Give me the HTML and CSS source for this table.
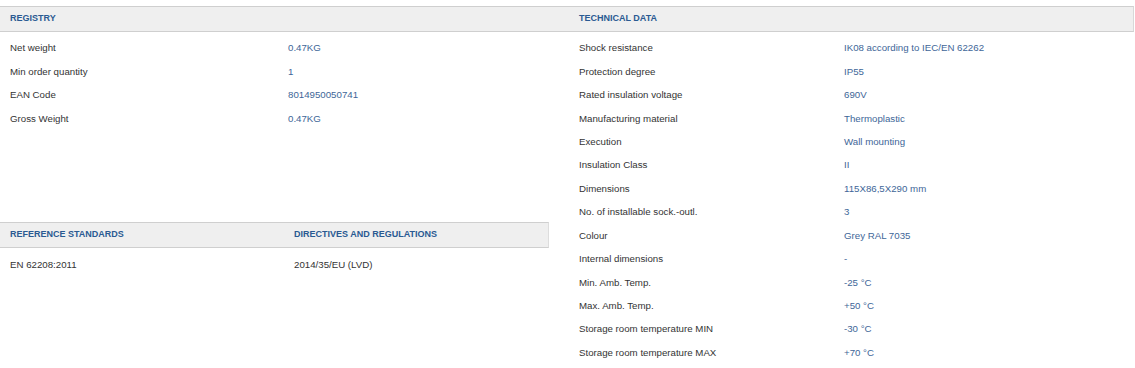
FILE: index.html
```html
<!DOCTYPE html>
<html lang="en">
<head>
<meta charset="utf-8">
<title>Product data</title>
<link rel="stylesheet" href="styles.css">
</head>
<body>
<div class="sheet">
  <div class="col col-left">
    <section class="block registry">
      <div class="head"><span class="title">REGISTRY</span></div>
      <div class="rows">
        <div class="row"><span class="label">Net weight</span><span class="value">0.47KG</span></div>
        <div class="row"><span class="label">Min order quantity</span><span class="value">1</span></div>
        <div class="row"><span class="label">EAN Code</span><span class="value">8014950050741</span></div>
        <div class="row"><span class="label">Gross Weight</span><span class="value">0.47KG</span></div>
      </div>
    </section>
    <section class="block standards">
      <div class="head head-split"><span class="title">REFERENCE STANDARDS</span><span class="title">DIRECTIVES AND REGULATIONS</span></div>
      <div class="rows">
        <div class="row row-split"><span class="label">EN 62208:2011</span><span class="label">2014/35/EU (LVD)</span></div>
      </div>
    </section>
  </div>
  <div class="col col-right">
    <section class="block technical">
      <div class="head"><span class="title">TECHNICAL DATA</span></div>
      <div class="rows">
        <div class="row"><span class="label">Shock resistance</span><span class="value">IK08 according to IEC/EN 62262</span></div>
        <div class="row"><span class="label">Protection degree</span><span class="value">IP55</span></div>
        <div class="row"><span class="label">Rated insulation voltage</span><span class="value">690V</span></div>
        <div class="row"><span class="label">Manufacturing material</span><span class="value">Thermoplastic</span></div>
        <div class="row"><span class="label">Execution</span><span class="value">Wall mounting</span></div>
        <div class="row"><span class="label">Insulation Class</span><span class="value">II</span></div>
        <div class="row"><span class="label">Dimensions</span><span class="value">115X86,5X290 mm</span></div>
        <div class="row"><span class="label">No. of installable sock.-outl.</span><span class="value">3</span></div>
        <div class="row"><span class="label">Colour</span><span class="value">Grey RAL 7035</span></div>
        <div class="row"><span class="label">Internal dimensions</span><span class="value">-</span></div>
        <div class="row"><span class="label">Min. Amb. Temp.</span><span class="value">-25 °C</span></div>
        <div class="row"><span class="label">Max. Amb. Temp.</span><span class="value">+50 °C</span></div>
        <div class="row"><span class="label">Storage room temperature MIN</span><span class="value">-30 °C</span></div>
        <div class="row"><span class="label">Storage room temperature MAX</span><span class="value">+70 °C</span></div>
      </div>
    </section>
  </div>
</div>
</body>
</html>
```

FILE: styles.css
```css
html, body {
  margin: 0;
  padding: 0;
  background: #ffffff;
}

body {
  font-family: "Liberation Sans", Arial, sans-serif;
  font-size: 9.7px;
  color: #333333;
}

.sheet {
  display: grid;
  grid-template-columns: 549px 585px;
  margin-top: 6px;
}

.head {
  display: flex;
  align-items: center;
  height: 23px;
  padding-bottom: 1px;
  box-sizing: content-box;
  background: #efefef;
  border-top: 1px solid #cfcfcf;
  border-bottom: 1px solid #cfcfcf;
}

.title {
  font-weight: bold;
  font-size: 9px;
  color: #2a5a92;
  position: relative;
  top: -1px;
}

.rows {
  padding-top: 4px;
}

.row {
  display: flex;
  height: 23.45px;
  align-items: center;
}

.label {
  color: #333333;
}

.value {
  color: #3e6698;
}

/* left column */
.col-left .head,
.col-left .row {
  padding-left: 10px;
}

.registry {
  height: 216px;
}

.registry .label {
  width: 278px;
}

.standards .head {
  border-right: 1px solid #dddddd;
}

.head-split .title:first-child,
.row-split .label:first-child {
  width: 284px;
}

.standards .rows {
  padding-top: 5px;
}

/* right column */
.col-right .head {
  padding-left: 30px;
  border-right: 1px solid #d8d8d8;
}

.col-right .row {
  padding-left: 30px;
}

.technical .label {
  width: 265px;
}
```
